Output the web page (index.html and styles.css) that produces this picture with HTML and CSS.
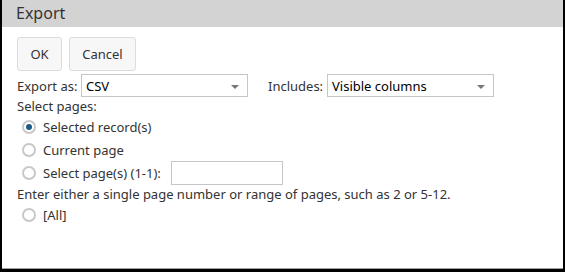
FILE: index.html
```html
<!DOCTYPE html>
<html>
<head>
<meta charset="utf-8">
<link rel="stylesheet" href="styles.css">
</head>
<body>
<div class="dialog">
  <div class="header">Export</div>
  <div class="content">
    <div class="buttons">
      <button class="btn btn-ok">OK</button>
      <button class="btn btn-cancel">Cancel</button>
    </div>
    <div class="row">
      <span class="label label-export">Export as:</span>
      <div class="select"><span>CSV</span><span class="arrow"></span></div>
      <span class="label label-includes">Includes:</span>
      <div class="select"><span>Visible columns</span><span class="arrow"></span></div>
    </div>
    <div class="text-line">Select pages:</div>
    <div class="radio-list">
      <div class="radio-row"><span class="radio checked"></span><span>Selected record(s)</span></div>
      <div class="radio-row"><span class="radio"></span><span>Current page</span></div>
      <div class="radio-row"><span class="radio"></span><span>Select page(s) (1-1):</span><span class="input"></span></div>
    </div>
    <div class="text-line help">Enter either a single page number or range of pages, such as 2 or 5-12.</div>
    <div class="radio-row"><span class="radio"></span><span>[All]</span></div>
  </div>
</div>
</body>
</html>
```
FILE: styles.css
```css
html, body {
  margin: 0;
  padding: 0;
  background: #fff;
}
.dialog {
  width: 565px;
  height: 272px;
  box-sizing: border-box;
  border-left: 2px solid #000;
  border-right: 2px solid #000;
  border-bottom: 3px solid #000;
  display: flex;
  flex-direction: column;
  font-family: "Segoe UI", "Noto Sans", sans-serif;
  font-size: 13px;
  color: #333;
}
.header {
  height: 27px;
  background: #d3d3d3;
  padding-left: 14px;
  font-size: 16px;
  line-height: 27px;
  color: #333;
}
.content {
  flex: 1;
  padding: 10px 0 0 15px;
  border-bottom: 1px solid #a0a0a0;
}
.buttons {
  display: flex;
  gap: 7px;
}
.btn {
  height: 34px;
  box-sizing: border-box;
  border: 1px solid #dcdcdc;
  border-radius: 3px;
  background: #f7f7f7;
  font-family: inherit;
  font-size: 13px;
  color: #333;
  padding: 0;
}
.btn-ok { width: 45px; }
.btn-cancel { width: 67px; }
.row {
  display: flex;
  align-items: center;
  margin-top: 3px;
  height: 23px;
}
.label-export { width: 64px; }
.label-includes { margin-left: 20px; width: 59px; }
.select {
  width: 167px;
  height: 23px;
  box-sizing: border-box;
  border: 1px solid #c6c6c6;
  display: flex;
  align-items: center;
  justify-content: space-between;
  padding: 0 8px 0 4px;
  color: #000;
}
.arrow {
  width: 0;
  height: 0;
  border-left: 4px solid transparent;
  border-right: 4px solid transparent;
  border-top: 4px solid #777;
  margin-top: 2px;
}
.text-line {
  height: 18px;
  line-height: 18px;
}
.radio-row {
  display: flex;
  align-items: center;
  height: 23px;
  padding-left: 5px;
}
.radio {
  width: 14px;
  height: 14px;
  box-sizing: border-box;
  border: 2px solid #c8c8c8;
  border-radius: 50%;
  margin-right: 7px;
  display: flex;
  align-items: center;
  justify-content: center;
}
.radio.checked::after {
  content: "";
  width: 6px;
  height: 6px;
  border-radius: 50%;
  background: #1e5a86;
}
.input {
  width: 112px;
  height: 24px;
  box-sizing: border-box;
  border: 1px solid #c6c6c6;
  margin-left: 10px;
}
.text-line.help {
  height: 19px;
  line-height: 20px;
}
```
